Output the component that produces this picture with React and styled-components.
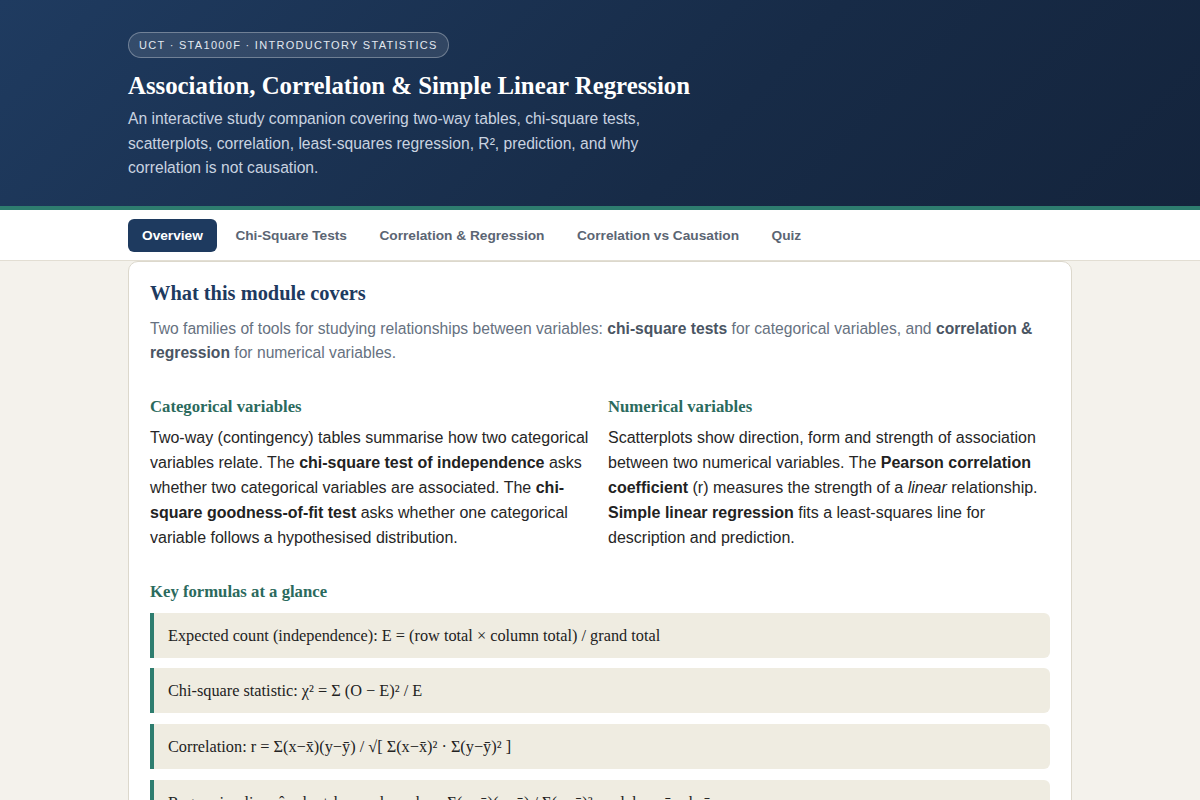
import React, { useState } from 'react';
import styled, { createGlobalStyle } from 'styled-components';

const GlobalStyle = createGlobalStyle`
  * { box-sizing: border-box; }
  body {
    margin: 0;
    background: #f4f2ec;
    font-family: 'Liberation Sans', Arial, sans-serif;
    color: #222;
  }
`;

const Container = styled.div`
  max-width: 944px;
  margin: 0 auto;
`;

const Hero = styled.header`
  background: linear-gradient(135deg, #1f3b60 0%, #172b47 60%, #14243c 100%);
  border-bottom: 4px solid #2e7d6f;
  padding: 32px 0 25px;
  color: #fff;
`;

const Badge = styled.span`
  display: inline-block;
  padding: 6px 10px;
  border: 1px solid rgba(255, 255, 255, 0.3);
  background: rgba(255, 255, 255, 0.1);
  border-radius: 14px;
  font-size: 11px;
  letter-spacing: 1.3px;
  text-transform: uppercase;
  color: #e2e8f0;
  line-height: 12px;
`;

const Title = styled.h1`
  font-family: 'Liberation Serif', 'Times New Roman', serif;
  font-size: 24.8px;
  font-weight: 700;
  margin: 13px 0 6px;
  line-height: 30px;
`;

const Lead = styled.p`
  margin: 0;
  max-width: 540px;
  font-size: 15.65px;
  line-height: 24.5px;
  color: #c9d3e0;
`;

const Nav = styled.nav`
  background: #fff;
  border-bottom: 1px solid #e2ded3;
  padding: 9px 0 8px;
`;

const TabRow = styled.div`
  display: flex;
  gap: 4.5px;
`;

const Tab = styled.button`
  border: none;
  border-radius: 6px;
  padding: 9px 14px;
  font-family: 'Liberation Sans', Arial, sans-serif;
  font-size: 13.7px;
  font-weight: 700;
  line-height: 15px;
  cursor: pointer;
  background: ${({ $active }) => ($active ? '#1e3a5f' : 'transparent')};
  color: ${({ $active }) => ($active ? '#fff' : '#5b6573')};
`;

const Card = styled.section`
  background: #fff;
  border: 1px solid #dcd8cc;
  border-radius: 10px;
  padding: 20px 21px 24px;
`;

const CardTitle = styled.h2`
  font-family: 'Liberation Serif', 'Times New Roman', serif;
  font-size: 20.4px;
  font-weight: 700;
  color: #1e3a5f;
  margin: 0 0 13px;
  line-height: 22px;
`;

const Intro = styled.p`
  margin: 0;
  font-size: 15.65px;
  line-height: 24.5px;
  color: #667180;

  strong {
    color: #4a5563;
  }
`;

const Columns = styled.div`
  display: grid;
  grid-template-columns: 1fr 1fr;
  gap: 16px;
  margin-top: 31px;
`;

const SubHeading = styled.h3`
  font-family: 'Liberation Serif', 'Times New Roman', serif;
  font-size: 16.7px;
  font-weight: 700;
  color: #2b6a5d;
  margin: 0 0 8px;
  line-height: 20px;
`;

const Body = styled.p`
  margin: 0;
  font-size: 16px;
  line-height: 25px;
  color: #262626;

  strong {
    color: #222;
  }
`;

const FormulaSection = styled.div`
  margin-top: 32px;
`;

const FormulaList = styled.div`
  display: flex;
  flex-direction: column;
  gap: 10.7px;
  margin-top: 11px;
`;

const Formula = styled.div`
  background: #efece1;
  border-left: 4px solid #2e7d6f;
  border-radius: 0 6px 6px 0;
  padding: 12px 14px;
  font-family: 'Liberation Serif', 'Times New Roman', serif;
  font-size: 16.3px;
  line-height: 21px;
  color: #222;
  white-space: pre-wrap;
`;

const tabs = [
  'Overview',
  'Chi-Square Tests',
  'Correlation & Regression',
  'Correlation vs Causation',
  'Quiz',
];

const formulas = [
  'Expected count (independence): E = (row total × column total) / grand total',
  'Chi-square statistic: χ² = Σ (O − E)² / E',
  'Correlation: r = Σ(x−x̄)(y−ȳ) / √[ Σ(x−x̄)² · Σ(y−ȳ)² ]',
  'Regression line: ŷ = b₀ + b₁x,  where  b₁ = Σ(x−x̄)(y−ȳ) / Σ(x−x̄)²  and  b₀ = ȳ − b₁x̄',
  'Coefficient of determination: R² = r² (proportion of variation in y explained by x)',
];

export default function App() {
  const [active, setActive] = useState('Overview');

  return (
    <>
      <GlobalStyle />
      <Hero>
        <Container>
          <Badge>UCT · STA1000F · Introductory Statistics</Badge>
          <Title>Association, Correlation &amp; Simple Linear Regression</Title>
          <Lead>
            An interactive study companion covering two-way tables, chi-square tests,
            scatterplots, correlation, least-squares regression, R², prediction, and why
            correlation is not causation.
          </Lead>
        </Container>
      </Hero>
      <Nav>
        <Container>
          <TabRow>
            {tabs.map((t) => (
              <Tab key={t} $active={t === active} onClick={() => setActive(t)}>
                {t}
              </Tab>
            ))}
          </TabRow>
        </Container>
      </Nav>
      <Container>
        <Card>
          <CardTitle>What this module covers</CardTitle>
          <Intro>
            Two families of tools for studying relationships between variables:{' '}
            <strong>chi-square tests</strong> for categorical variables, and{' '}
            <strong>correlation &amp; regression</strong> for numerical variables.
          </Intro>
          <Columns>
            <div>
              <SubHeading>Categorical variables</SubHeading>
              <Body>
                Two-way (contingency) tables summarise how two categorical variables
                relate. The <strong>chi-square test of independence</strong> asks whether
                two categorical variables are associated. The{' '}
                <strong>chi-square goodness-of-fit test</strong> asks whether one
                categorical variable follows a hypothesised distribution.
              </Body>
            </div>
            <div>
              <SubHeading>Numerical variables</SubHeading>
              <Body>
                Scatterplots show direction, form and strength of association between two
                numerical variables. The <strong>Pearson correlation coefficient</strong>{' '}
                (r) measures the strength of a <em>linear</em> relationship.{' '}
                <strong>Simple linear regression</strong> fits a least-squares line for
                description and prediction.
              </Body>
            </div>
          </Columns>
          <FormulaSection>
            <SubHeading>Key formulas at a glance</SubHeading>
            <FormulaList>
              {formulas.map((f) => (
                <Formula key={f}>{f}</Formula>
              ))}
            </FormulaList>
          </FormulaSection>
        </Card>
      </Container>
    </>
  );
}
